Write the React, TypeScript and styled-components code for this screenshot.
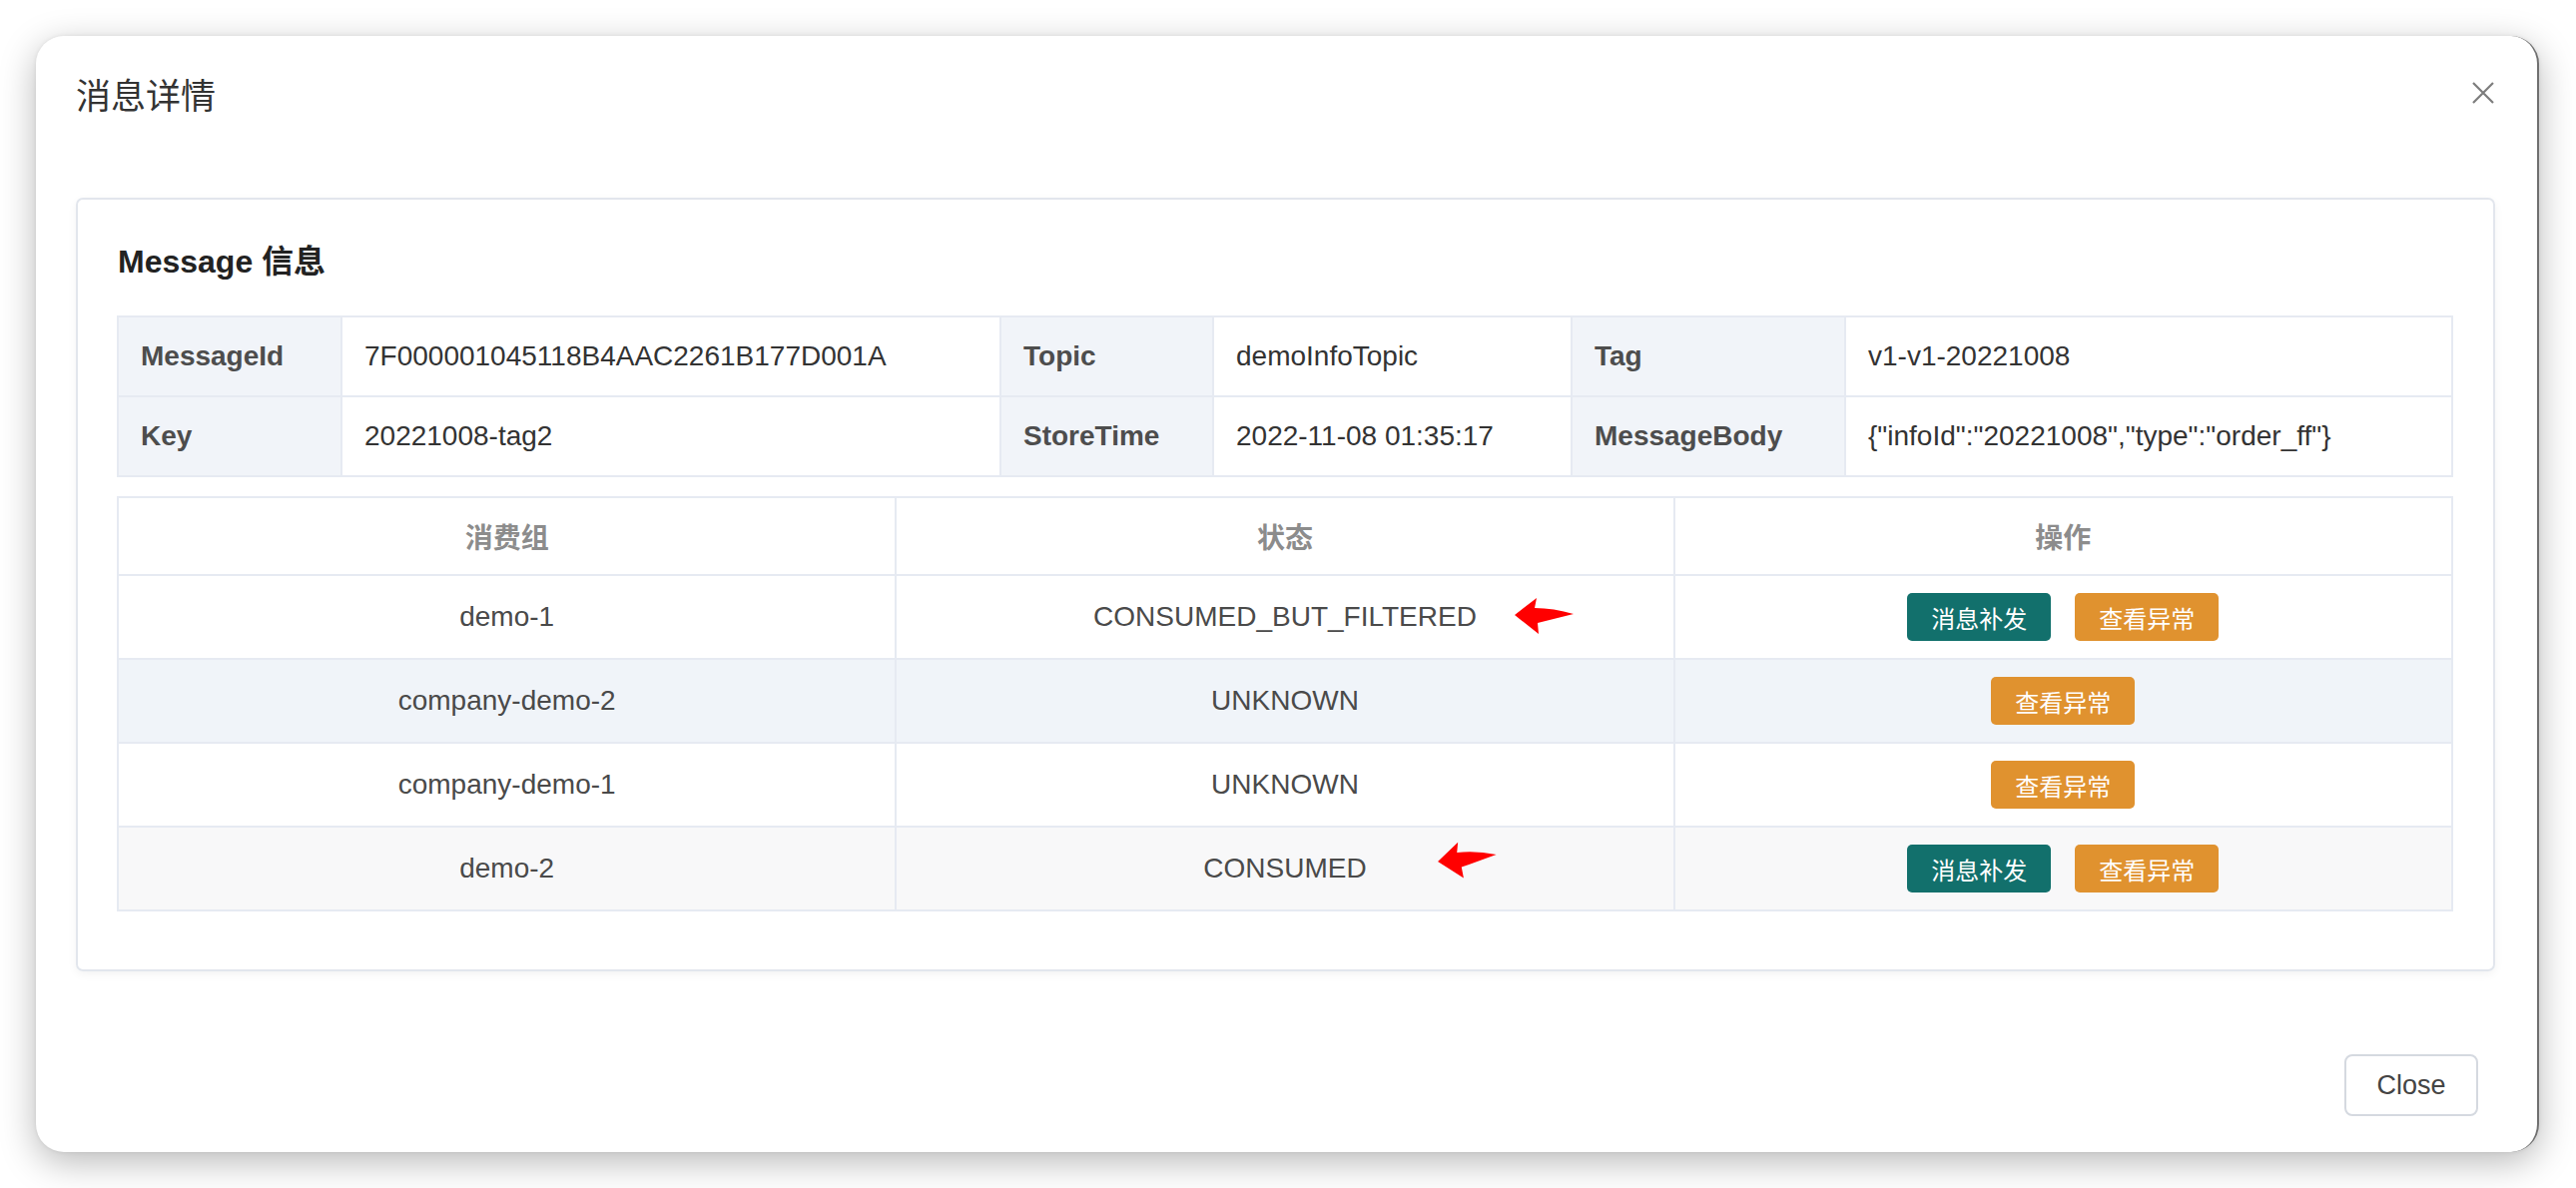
import React from "react";
import styled, { createGlobalStyle } from "styled-components";

const GlobalStyle = createGlobalStyle`
  html, body {
    margin: 0;
    padding: 0;
    background: #ffffff;
  }
  body {
    font-family: "Liberation Sans", "Noto Sans CJK SC", sans-serif;
    color: #333;
  }
`;

const Page = styled.div`
  width: 2580px;
  height: 1190px;
  padding: 36px 37px 36px 36px;
  box-sizing: border-box;
  background: #fff;
`;

const Dialog = styled.div`
  width: 2507px;
  height: 1118px;
  box-sizing: border-box;
  background: #fff;
  border-radius: 28px;
  border-right: 2px solid #707070;
  box-shadow: 0 10px 36px rgba(0, 0, 0, 0.28), 0 0 4px rgba(0, 0, 0, 0.08);
  display: flex;
  flex-direction: column;
`;

const DialogHeader = styled.div`
  height: 114px;
  display: flex;
  align-items: center;
  justify-content: space-between;
  padding: 0 43px 0 40px;
`;

const DialogTitle = styled.h4`
  margin: 0;
  font-size: 35px;
  line-height: 1;
  font-weight: 400;
  color: #333;
  font-family: "Noto Sans CJK SC", "Liberation Sans", sans-serif;
`;

const CloseIcon = styled.button`
  border: none;
  background: none;
  padding: 0;
  width: 22px;
  height: 22px;
  display: flex;
  align-items: center;
  justify-content: center;
  cursor: pointer;
`;

const DialogBody = styled.div`
  padding: 48px 42px 0 40px;
`;

const Card = styled.div`
  height: 775px;
  box-sizing: border-box;
  border: 2px solid #e2e6ed;
  border-radius: 7px;
  box-shadow: 0 3px 10px rgba(0, 0, 0, 0.05);
  padding: 42px 40px 0 39px;
`;

const CardTitle = styled.div`
  font-size: 32px;
  line-height: 40px;
  font-weight: 700;
  color: #222;
  margin-left: 1px;
  margin-bottom: 34px;
`;

const InfoGrid = styled.div`
  display: grid;
  grid-template-columns: 224px 660px 213px 359px 274px 1fr;
  border-top: 2px solid #e6eaf2;
  border-left: 2px solid #e6eaf2;
`;

const InfoCell = styled.div<{ $label?: boolean }>`
  height: 80px;
  box-sizing: border-box;
  display: flex;
  align-items: center;
  padding: 0 22px;
  border-right: 2px solid #e6eaf2;
  border-bottom: 2px solid #e6eaf2;
  font-size: 28px;
  font-weight: ${(p) => (p.$label ? 700 : 400)};
  color: ${(p) => (p.$label ? "#4d4d4d" : "#333")};
  background: ${(p) => (p.$label ? "#f1f4f9" : "#fff")};
  white-space: nowrap;
`;

const GroupTable = styled.div`
  margin-top: 19px;
  border-top: 2px solid #e6eaf2;
  border-left: 2px solid #e6eaf2;
`;

const GroupRow = styled.div<{ $bg?: string; $head?: boolean }>`
  display: grid;
  grid-template-columns: repeat(3, 1fr);
  height: ${(p) => (p.$head ? "78px" : "84px")};
  background: ${(p) => p.$bg || "#fff"};
`;

const GroupCell = styled.div<{ $head?: boolean }>`
  display: flex;
  align-items: center;
  justify-content: center;
  gap: 24px;
  border-right: 2px solid #e6eaf2;
  border-bottom: 2px solid #e6eaf2;
  font-size: 28px;
  font-weight: ${(p) => (p.$head ? 700 : 400)};
  color: ${(p) => (p.$head ? "#8c8c8c" : "#4a4a4a")};
  font-family: ${(p) =>
    p.$head
      ? `"Noto Sans CJK SC", "Liberation Sans", sans-serif`
      : `"Liberation Sans", "Noto Sans CJK SC", sans-serif`};
`;

const StatusText = styled.span`
  position: relative;
`;

const Marker = styled.svg<{ $offset: number; $top: number }>`
  position: absolute;
  left: calc(100% + ${(p) => p.$offset}px);
  top: ${(p) => p.$top}px;
`;

const ActionButton = styled.button<{ $kind: "resend" | "error" }>`
  width: 144px;
  height: 48px;
  border: none;
  border-radius: 5px;
  background: ${(p) => (p.$kind === "resend" ? "#12706c" : "#e0922f")};
  color: #fff;
  font-size: 24px;
  font-family: "Noto Sans CJK SC", sans-serif;
  padding: 0;
  cursor: pointer;
`;

const DialogFooter = styled.div`
  margin-top: auto;
  display: flex;
  justify-content: flex-end;
  padding: 0 59px 36px 0;
`;

const CloseButton = styled.button`
  width: 134px;
  height: 62px;
  border: 2px solid #d5d9e0;
  border-radius: 8px;
  background: #fff;
  color: #444;
  font-size: 27px;
  font-family: "Liberation Sans", sans-serif;
  cursor: pointer;
`;

const RedArrow = ({ offset, top, tilt }: { offset: number; top: number; tilt?: number }) => (
  <Marker $offset={offset} $top={top} width="62" height="38" viewBox="0 0 62 38">
    <path
      d="M1 18 L23 1 L21 11 Q40 11 60 17 Q40 22 24 26 L25 37 Z"
      fill="#ff0000"
      transform={tilt ? `rotate(${tilt} 30 19)` : undefined}
    />
  </Marker>
);

const infoRows = [
  [
    ["MessageId", "7F000001045118B4AAC2261B177D001A"],
    ["Topic", "demoInfoTopic"],
    ["Tag", "v1-v1-20221008"],
  ],
  [
    ["Key", "20221008-tag2"],
    ["StoreTime", "2022-11-08 01:35:17"],
    ["MessageBody", '{"infoId":"20221008","type":"order_ff"}'],
  ],
];

type Group = {
  name: string;
  status: string;
  resend: boolean;
  bg: string;
  arrow?: { offset: number; top: number; tilt?: number };
};

const groups: Group[] = [
  { name: "demo-1", status: "CONSUMED_BUT_FILTERED", resend: true, bg: "#fff", arrow: { offset: 37, top: -4 } },
  { name: "company-demo-2", status: "UNKNOWN", resend: false, bg: "#f0f4f9" },
  { name: "company-demo-1", status: "UNKNOWN", resend: false, bg: "#fff" },
  { name: "demo-2", status: "CONSUMED", resend: true, bg: "#f8f8f9", arrow: { offset: 70, top: -12, tilt: -6 } },
];

export default function App() {
  return (
    <>
      <GlobalStyle />
      <Page>
        <Dialog>
          <DialogHeader>
            <DialogTitle>消息详情</DialogTitle>
            <CloseIcon aria-label="close">
              <svg width="22" height="22" viewBox="0 0 22 22">
                <path d="M1 1 L21 21 M21 1 L1 21" stroke="#7d7d7d" strokeWidth="2.2" />
              </svg>
            </CloseIcon>
          </DialogHeader>
          <DialogBody>
            <Card>
              <CardTitle>Message 信息</CardTitle>
              <InfoGrid>
                {infoRows.map((row) =>
                  row.map(([label, value]) => (
                    <React.Fragment key={label}>
                      <InfoCell $label>{label}</InfoCell>
                      <InfoCell>{value}</InfoCell>
                    </React.Fragment>
                  ))
                )}
              </InfoGrid>
              <GroupTable>
                <GroupRow $head>
                  <GroupCell $head>消费组</GroupCell>
                  <GroupCell $head>状态</GroupCell>
                  <GroupCell $head>操作</GroupCell>
                </GroupRow>
                {groups.map((g) => (
                  <GroupRow key={g.name} $bg={g.bg}>
                    <GroupCell>{g.name}</GroupCell>
                    <GroupCell>
                      <StatusText>
                        {g.status}
                        {g.arrow && <RedArrow {...g.arrow} />}
                      </StatusText>
                    </GroupCell>
                    <GroupCell>
                      {g.resend && <ActionButton $kind="resend">消息补发</ActionButton>}
                      <ActionButton $kind="error">查看异常</ActionButton>
                    </GroupCell>
                  </GroupRow>
                ))}
              </GroupTable>
            </Card>
          </DialogBody>
          <DialogFooter>
            <CloseButton>Close</CloseButton>
          </DialogFooter>
        </Dialog>
      </Page>
    </>
  );
}
